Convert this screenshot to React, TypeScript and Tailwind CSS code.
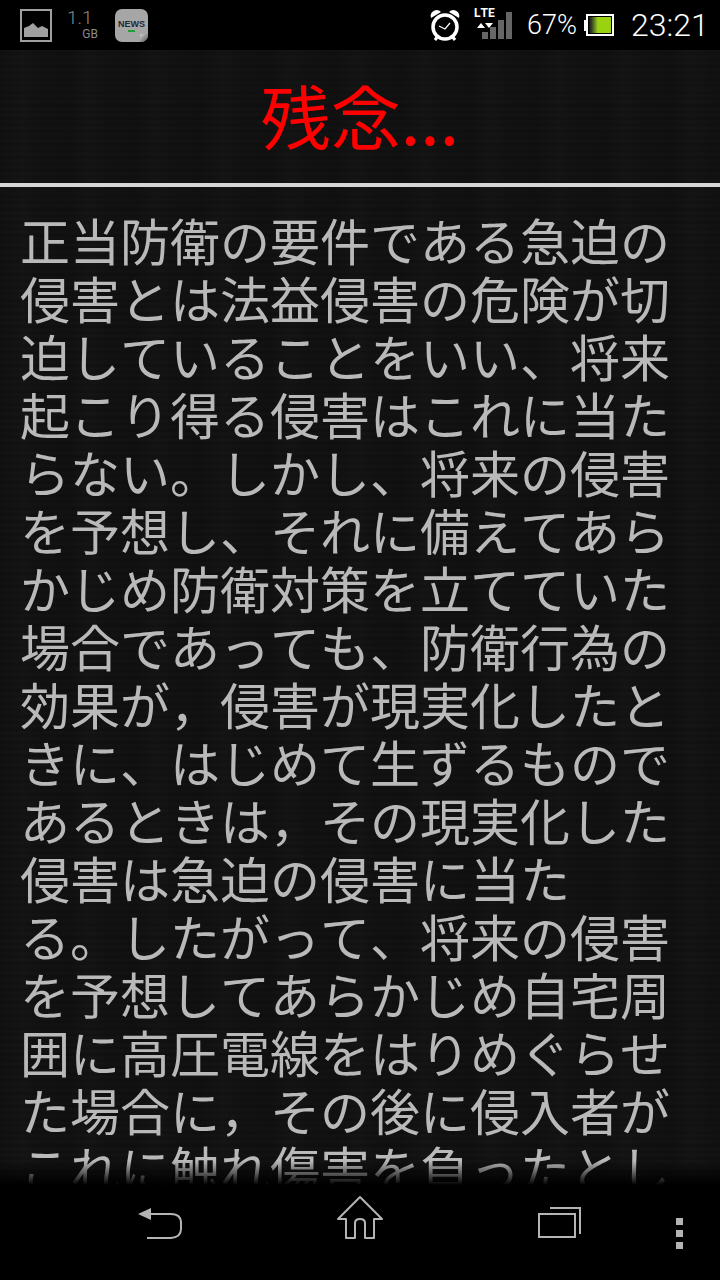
const LINES = [
  "正当防衛の要件である急迫の",
  "侵害とは法益侵害の危険が切",
  "迫していることをいい、将来",
  "起こり得る侵害はこれに当た",
  "らない。しかし、将来の侵害",
  "を予想し、それに備えてあら",
  "かじめ防衛対策を立てていた",
  "場合であっても、防衛行為の",
  "効果が，侵害が現実化したと",
  "きに、はじめて生ずるもので",
  "あるときは，その現実化した",
  "侵害は急迫の侵害に当た",
  "る。したがって、将来の侵害",
  "を予想してあらかじめ自宅周",
  "囲に高圧電線をはりめぐらせ",
  "た場合に，その後に侵入者が",
  "これに触れ傷害を負ったとし",
];

function StatusBar() {
  return (
    <div className="h-[50px] bg-black flex items-center shrink-0 font-['Roboto',sans-serif]">
      <svg width="32" height="33" viewBox="0 0 32 33" className="ml-5 text-[#a0a0a0]">
        <rect x="1" y="1" width="30" height="31" fill="none" stroke="currentColor" strokeWidth="2" />
        <path d="M4 28v-9l5-2 4-3 5 5 4-2 6 3v8z" fill="currentColor" />
      </svg>
      <div className="ml-[15px] w-[32px] h-[32px] text-[#8c8c8c] flex flex-col leading-none">
        <span className="text-[19px] leading-[18px] font-light">1.1</span>
        <span className="text-[12px] leading-[12px] self-end mr-[1px] mt-[1px]">GB</span>
      </div>
      <div className="ml-[16px] w-[33px] h-[33px] rounded-[7px] bg-[#a6a6a6] flex flex-col items-center pt-[11px] relative overflow-hidden">
        <span className="text-[9px] leading-[9px] font-bold text-[#20263a] font-['Liberation_Sans',sans-serif]">NEWS</span>
        <span className="w-[7px] h-[2px] bg-[#22a035] mt-[1px]" />
        <span className="absolute right-0 bottom-0 w-[8px] h-[8px] bg-gradient-to-br from-[#d0d0d0] to-[#555]" />
      </div>
      <svg width="32" height="34" viewBox="0 0 32 34" className="ml-[281px] text-white">
        <circle cx="16" cy="19" r="12" fill="none" stroke="currentColor" strokeWidth="3.5" />
        <path d="M2 10a6 6 0 0 1 10-6zM30 10a6 6 0 0 0-10-6z" fill="currentColor" />
        <path d="M6 32l3-4M26 32l-3-4" stroke="currentColor" strokeWidth="3" />
        <path d="M10 18l6 3 5-6" fill="none" stroke="currentColor" strokeWidth="1.2" />
      </svg>
      <div className="ml-[13px] w-[40px] h-[40px] relative">
        <svg width="40" height="40" viewBox="0 0 40 40" className="absolute left-0 top-0">
          <rect x="8" y="27" width="6" height="7" fill="#666" />
          <rect x="16" y="22" width="6" height="12" fill="#666" />
          <rect x="24" y="15" width="6" height="19" fill="#666" />
          <rect x="32" y="7" width="6" height="27" fill="#666" />
          <path d="M3 23l4-5 4 5zM11 18l4 5 4-5z" fill="#fff" />
        </svg>
        <span className="absolute left-0 top-[2px] text-[12px] leading-[13px] font-bold text-white">LTE</span>
      </div>
      <span className="ml-[13px] text-[27px] leading-none font-light text-white">67%</span>
      <div className="ml-[7px] flex items-center">
        <span className="w-[2px] h-[11px] bg-white" />
        <div className="w-[28px] h-[22px] border-2 border-white bg-black p-[1px]">
          <span className="block w-full h-full bg-gradient-to-r from-[#111111] via-[#9ad110] via-40% to-[#9ad110]" />
        </div>
      </div>
      <span className="ml-[17px] text-[32px] leading-none font-light text-white">23:21</span>
    </div>
  );
}

function NavBar() {
  return (
    <div className="h-[95px] bg-black shrink-0 relative text-[#b4b4b4]">
      <svg width="46" height="36" viewBox="0 0 46 36" className="absolute left-[137px] top-[20px]">
        <path d="M1 9l13-6v12z" fill="currentColor" />
        <path d="M12 9h22q10 0 10 9v6q0 8-10 9H10" fill="none" stroke="currentColor" strokeWidth="2" />
      </svg>
      <svg width="46" height="44" viewBox="0 0 46 44" className="absolute left-[337px] top-[10px]">
        <path d="M1 24L23 2l22 22H37V43H28V28q0-4-5-4t-5 4V43H9V24z" fill="none" stroke="currentColor" strokeWidth="2" strokeLinejoin="round" />
      </svg>
      <svg width="46" height="32" viewBox="0 0 46 32" className="absolute left-[537px] top-[21px]">
        <rect x="2" y="8" width="36" height="23" fill="none" stroke="currentColor" strokeWidth="2" />
        <path d="M13 2h30v26" fill="none" stroke="currentColor" strokeWidth="2" />
      </svg>
      <div className="absolute left-[676px] top-[33px] flex flex-col gap-[5px]">
        <span className="w-[7px] h-[7px] bg-current" />
        <span className="w-[7px] h-[7px] bg-current" />
        <span className="w-[7px] h-[7px] bg-current" />
      </div>
    </div>
  );
}

export default function App() {
  return (
    <div className="w-[720px] h-[1280px] flex flex-col bg-black overflow-hidden font-['Noto_Sans_CJK_JP',sans-serif] [font-kerning:none]">
      <StatusBar />
      <div className="flex-1 min-h-0 relative overflow-hidden bg-[#121212] bg-[repeating-linear-gradient(0deg,rgba(0,0,0,0.14)_0px,rgba(255,255,255,0.008)_4px,rgba(0,0,0,0.07)_7px,rgba(255,255,255,0.006)_11px,rgba(0,0,0,0.14)_13px),repeating-linear-gradient(90deg,rgba(0,0,0,0.1)_0px,rgba(255,255,255,0.008)_23px,rgba(0,0,0,0.06)_41px,rgba(0,0,0,0.1)_67px)]">
        <div className="h-[133px] flex items-center justify-center">
          <h1 className="text-[70px] leading-none font-normal text-[#ff0000] mt-[-4px]">残念...</h1>
        </div>
        <div className="h-1 bg-[#d6d6d6]" />
        <div className="pl-[20px] pt-[23px] text-[50px] leading-[58px] text-[#b9b9b9] whitespace-nowrap">
          {LINES.map((line, i) => (
            <div key={i}>{line}</div>
          ))}
        </div>
        <div className="absolute left-0 right-0 bottom-0 h-[24px] bg-gradient-to-b from-transparent to-black" />
      </div>
      <NavBar />
    </div>
  );
}
